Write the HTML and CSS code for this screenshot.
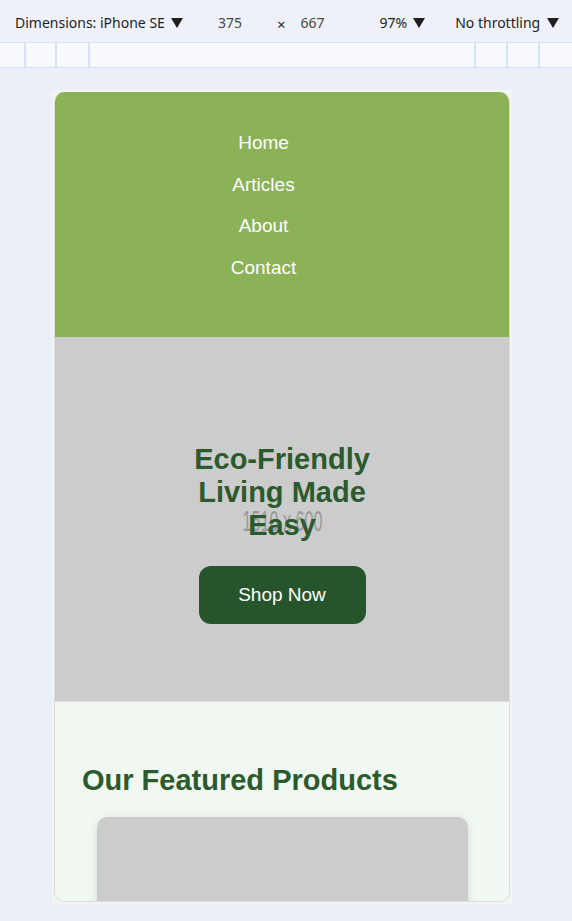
FILE: index.html
```html
<!DOCTYPE html>
<html lang="en">
<head>
<meta charset="utf-8">
<title>Eco-Friendly Living</title>
<link rel="stylesheet" href="styles.css">
</head>
<body>
<div class="toolbar">
  <div class="tb-item tb-dims">Dimensions: iPhone SE <svg class="caret" viewBox="0 0 12 10"><path d="M0 0H12L6 10Z"/></svg></div>
  <div class="tb-num tb-w">375</div>
  <div class="tb-x">×</div>
  <div class="tb-num tb-h">667</div>
  <div class="tb-item tb-zoom">97% <svg class="caret" viewBox="0 0 12 10"><path d="M0 0H12L6 10Z"/></svg></div>
  <div class="tb-item tb-throttle">No throttling <svg class="caret" viewBox="0 0 12 10"><path d="M0 0H12L6 10Z"/></svg></div>
</div>
<div class="ruler">
  <div class="r-left">
    <span class="seg s1"></span><span class="seg s2"></span><span class="seg s3"></span>
  </div>
  <div class="r-right">
    <span class="seg s4"></span><span class="seg s5"></span><span class="seg s6"></span>
  </div>
</div>
<div class="canvas">
  <div class="device">
    <div class="screen">
      <header class="site-header">
        <nav>
          <ul class="nav">
            <li><a href="#">Home</a></li>
            <li><a href="#">Articles</a></li>
            <li><a href="#">About</a></li>
            <li><a href="#">Contact</a></li>
          </ul>
        </nav>
      </header>
      <section class="hero">
        <span class="placeholder">1510 x 600</span>
        <div class="hero-content">
          <h1>Eco-Friendly Living Made Easy</h1>
          <a class="btn" href="#">Shop Now</a>
        </div>
      </section>
      <section class="products">
        <h2>Our Featured Products</h2>
        <div class="card"></div>
      </section>
    </div>
  </div>
</div>
</body>
</html>
```

FILE: styles.css
```css
* { box-sizing: border-box; }
html, body { margin: 0; padding: 0; }
body {
  background: #ebeff8;
  width: 572px;
  height: 921px;
  overflow: hidden;
  font-family: "Noto Sans", "Liberation Sans", sans-serif;
}

/* devtools toolbar */
.toolbar {
  height: 42px;
  background: #eef1f9;
  display: flex;
  align-items: center;
  padding-top: 3px;
  font-size: 14px;
  color: #1f1f1f;
}
.tb-item { display: flex; align-items: center; gap: 6px; white-space: nowrap; }
.caret { width: 12px; height: 10px; fill: #1f1f1f; }
.tb-dims { margin-left: 15px; }
.tb-num { color: #474747; }
.tb-w { margin-left: 35px; }
.tb-x { margin-left: 35px; font-size: 15px; margin-top: 3px; }
.tb-h { margin-left: 15px; }
.tb-zoom { margin-left: 55px; }
.tb-throttle { margin-left: 30px; gap: 7px; }

.ruler {
  height: 26px;
  background: #f8fafe;
  border-top: 1px solid #d3e2fb;
  border-bottom: 1px solid #d3e2fb;
  display: flex;
  justify-content: space-between;
}
.r-left, .r-right { display: flex; }
.seg { display: block; height: 100%; }
.s1 { width: 26px; border-right: 2px solid #d3e2fb; }
.s2 { width: 31px; border-right: 2px solid #d3e2fb; }
.s3 { width: 33px; border-right: 2px solid #d3e2fb; }
.s4 { width: 32px; border-left: 2px solid #d3e2fb; }
.s5 { width: 32px; border-left: 2px solid #d3e2fb; }
.s6 { width: 34px; border-left: 2px solid #d3e2fb; }

/* device */
.canvas { padding: 22px 0 0 52px; }
.device {
  width: 460px;
  height: 814px;
  background: #f4f4f4;
  padding: 2px;
}
.screen {
  height: 100%;
  border-radius: 10px;
  overflow: hidden;
  border: 1px solid #dcdcdc;
  border-top: 0;
  background: #f1f8f1;
  font-family: "Liberation Sans", Arial, sans-serif;
}

.site-header {
  background: #8cb257;
  height: 245px;
  padding-top: 30px;
}
.nav {
  list-style: none;
  margin: 0;
  padding: 0 37px 0 0;
  display: flex;
  flex-direction: column;
  align-items: center;
}
.nav li { line-height: 41.7px; font-size: 19px; }
.nav a { color: #ffffff; text-decoration: none; }

.hero {
  position: relative;
  background: #cccccc;
  height: 365px;
  border-bottom: 1px solid #dedede;
  padding-top: 106px;
}
.placeholder {
  position: absolute;
  left: 1px;
  right: 0;
  top: 169px;
  text-align: center;
  font-size: 30px;
  line-height: 30px;
  color: #9a9a9a;
  transform: scaleX(0.54);
}
.hero-content {
  position: relative;
  display: flex;
  flex-direction: column;
  align-items: center;
}
.hero h1 {
  margin: 0;
  width: 200px;
  text-align: center;
  font-size: 29px;
  line-height: 33px;
  color: #2a5a2d;
}
.btn {
  margin-top: 24px;
  display: inline-block;
  width: 167px;
  height: 58px;
  line-height: 58px;
  text-align: center;
  background: #27552b;
  color: #ffffff;
  font-size: 19px;
  border-radius: 12px;
  text-decoration: none;
}

.products {
  background: #f1f8f1;
  padding: 61px 0 0 27px;
}
.products h2 {
  margin: 0;
  font-size: 29px;
  line-height: 34px;
  color: #2a5a2d;
}
.card {
  margin: 20px 0 0 15px;
  width: 371px;
  height: 200px;
  background: #cccccc;
  border-radius: 10px;
  box-shadow: 0 2px 8px rgba(0, 0, 0, 0.12);
}
```
